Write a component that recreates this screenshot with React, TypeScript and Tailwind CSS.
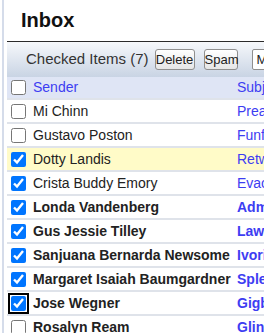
const rows = [
  { name: 'Mi Chinn', subject: 'Preamble notes', checked: false, bold: false },
  { name: 'Gustavo Poston', subject: 'Funfair tickets', checked: false, bold: false },
  { name: 'Dotty Landis', subject: 'Retweet this', checked: true, bold: false, highlight: true },
  { name: 'Crista Buddy Emory', subject: 'Evacuation plan', checked: true, bold: false },
  { name: 'Londa Vandenberg', subject: 'Admission form', checked: true, bold: true },
  { name: 'Gus Jessie Tilley', subject: 'Lawn service', checked: true, bold: true },
  { name: 'Sanjuana Bernarda Newsome', subject: 'Ivories recital', checked: true, bold: true },
  { name: 'Margaret Isaiah Baumgardner', subject: 'Splendid news', checked: true, bold: true },
  { name: 'Jose Wegner', subject: 'Gigbag order', checked: true, bold: true, focused: true },
  { name: 'Rosalyn Ream', subject: 'Glint report', checked: false, bold: true },
];

function Check({ checked, focused }: { checked: boolean; focused?: boolean }) {
  return (
    <input
      type="checkbox"
      readOnly
      checked={checked}
      className={
        'm-0 h-[15px] w-[15px] shrink-0 ' +
        (focused ? 'rounded-[3px] outline-2 outline-offset-1 outline-black' : '')
      }
    />
  );
}

export default function App() {
  return (
    <div className="h-[333px] w-[264px] overflow-hidden bg-white font-['Liberation_Sans',Arial,sans-serif]">
      <div className="ml-[2px] h-full w-[560px] border-l-2 border-[#d5dcea] pl-[3px]">
        {/* title */}
        <div className="h-[41px] pl-[14px] pt-[8px] text-[20px] font-bold leading-[24px] text-[#111]">
          Inbox
        </div>

        {/* toolbar */}
        <div className="flex h-[36px] items-center border-t border-[#2b2b2b] bg-gradient-to-b from-[#f6f8fb] to-[#c9d4e4] pl-[19px] text-[15px] text-[#333]">
          <span>Checked Items (7)</span>
          <button className="ml-[6px] h-[21px] w-[40px] rounded-[3px] border border-[#8f8f8f] bg-gradient-to-b from-white to-[#e6e6e6] text-[13px] leading-none text-[#222]">
            Delete
          </button>
          <button className="ml-[9px] h-[21px] w-[34px] rounded-[3px] border border-[#8f8f8f] bg-gradient-to-b from-white to-[#e6e6e6] text-[13px] leading-none text-[#222]">
            Spam
          </button>
          <div className="ml-[14px] flex h-[21px] w-[90px] items-center rounded-[2px] border border-[#8f8f8f] bg-white pl-[4px] text-[13px] text-[#222]">
            Move to...
          </div>
        </div>

        {/* header row */}
        <div className="grid h-[21px] grid-cols-[230px_1fr] items-center bg-[#dfe5f5] text-[14px] text-[#3d3df2]">
          <div className="flex items-center gap-[7px] pl-[4px]">
            <Check checked={false} />
            <span>Sender</span>
          </div>
          <span>Subject</span>
        </div>

        {rows.map((r) => (
          <div
            key={r.name}
            className={
              'grid h-[24px] grid-cols-[230px_1fr] items-center border-t-2 border-[#dfe3ea] text-[14px] ' +
              (r.highlight ? 'bg-[#fffbc8] ' : 'bg-white ') +
              (r.bold ? 'font-bold' : '')
            }
          >
            <div className="flex items-center gap-[7px] pl-[4px] text-[#222]">
              <Check checked={r.checked} focused={r.focused} />
              <span className="whitespace-nowrap">{r.name}</span>
            </div>
            <span className="whitespace-nowrap text-[#3d3df2]">{r.subject}</span>
          </div>
        ))}
      </div>
    </div>
  );
}
